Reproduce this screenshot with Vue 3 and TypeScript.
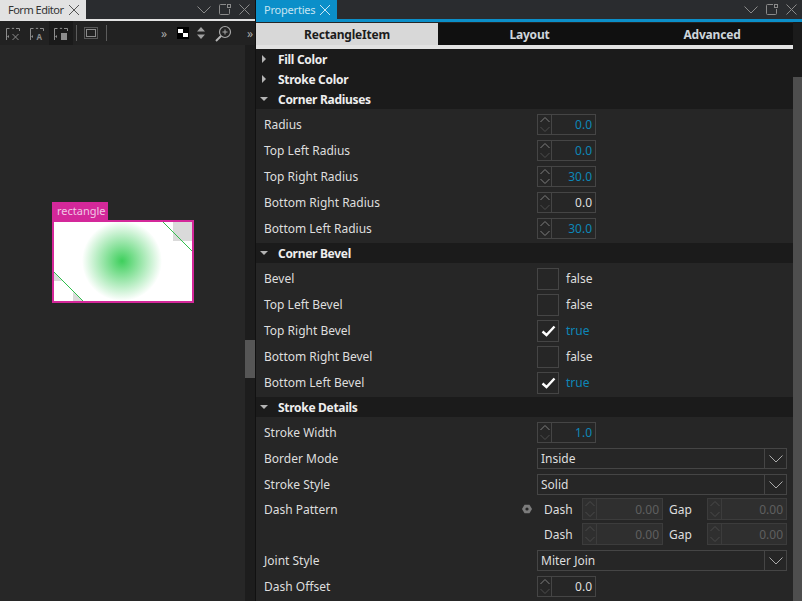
<script setup lang="ts">
type Row =
  | { kind: 'spin'; label: string; value: string; on?: boolean; dim?: boolean }
  | { kind: 'check'; label: string; on: boolean }
  | { kind: 'combo'; label: string; value: string }
  | { kind: 'dash'; label: string }

interface Section {
  title: string
  open: boolean
  rows: Row[]
}

const sections: Section[] = [
  { title: 'Fill Color', open: false, rows: [] },
  { title: 'Stroke Color', open: false, rows: [] },
  {
    title: 'Corner Radiuses',
    open: true,
    rows: [
      { kind: 'spin', label: 'Radius', value: '0.0', on: true, dim: true },
      { kind: 'spin', label: 'Top Left Radius', value: '0.0', on: true, dim: true },
      { kind: 'spin', label: 'Top Right Radius', value: '30.0', on: true },
      { kind: 'spin', label: 'Bottom Right Radius', value: '0.0', dim: true },
      { kind: 'spin', label: 'Bottom Left Radius', value: '30.0', on: true },
    ],
  },
  {
    title: 'Corner Bevel',
    open: true,
    rows: [
      { kind: 'check', label: 'Bevel', on: false },
      { kind: 'check', label: 'Top Left Bevel', on: false },
      { kind: 'check', label: 'Top Right Bevel', on: true },
      { kind: 'check', label: 'Bottom Right Bevel', on: false },
      { kind: 'check', label: 'Bottom Left Bevel', on: true },
    ],
  },
  {
    title: 'Stroke Details',
    open: true,
    rows: [
      { kind: 'spin', label: 'Stroke Width', value: '1.0', on: true, dim: true },
      { kind: 'combo', label: 'Border Mode', value: 'Inside' },
      { kind: 'combo', label: 'Stroke Style', value: 'Solid' },
      { kind: 'dash', label: 'Dash Pattern' },
      { kind: 'combo', label: 'Joint Style', value: 'Miter Join' },
      { kind: 'spin', label: 'Dash Offset', value: '0.0', dim: true },
    ],
  },
]

const tabs = ['RectangleItem', 'Layout', 'Advanced']
</script>

<template>
  <div class="app">
    <section class="left">
      <header class="dock-head">
        <div class="dock-tab light">
          <span>Form Editor</span>
          <svg width="12" height="12" viewBox="0 0 12 12"><path d="M1 1l10 10M11 1L1 11" stroke="#555" fill="none" /></svg>
        </div>
        <div class="dock-actions">
          <svg width="14" height="8" viewBox="0 0 14 8"><path d="M.5 .5l6.5 6.5 6.5-6.5" stroke="#8a8a8a" fill="none" /></svg>
          <svg width="14" height="13" viewBox="0 0 14 13"><path d="M8 1.5H2.5a1 1 0 0 0-1 1v8a1 1 0 0 0 1 1h8a1 1 0 0 0 1-1V6" stroke="#8a8a8a" fill="none" /><rect x="9.5" y="1.5" width="3" height="3" stroke="#8a8a8a" fill="none" /></svg>
          <svg width="11" height="11" viewBox="0 0 11 11"><path d="M.5.5l10 10M10.5.5l-10 10" stroke="#8a8a8a" fill="none" /></svg>
        </div>
      </header>
      <div class="light-line"></div>
      <div class="toolbar">
        <div class="tool">
          <svg width="14" height="14" viewBox="0 0 14 14"><path d="M.5 13V1.5h3M10 1.5h3.5V4" stroke="#8c8c8c" fill="none" /><path d="M7 .5l1.5 1.5h-3z" fill="#8c8c8c" /><path d="M3 8l-2 1.5L3 11z" fill="#8c8c8c" /><path d="M6.5 7l6 6M12.5 7l-6 6" stroke="#8c8c8c" fill="none" /></svg>
        </div>
        <div class="tool">
          <svg width="14" height="14" viewBox="0 0 14 14"><path d="M.5 13V1.5h3M10 1.5h3.5V4" stroke="#8c8c8c" fill="none" /><path d="M7 .5l1.5 1.5h-3z" fill="#8c8c8c" /><path d="M3 8l-2 1.5L3 11z" fill="#8c8c8c" /><text x="6.5" y="13" class="icon-letter">A</text></svg>
        </div>
        <div class="tool on">
          <svg width="14" height="14" viewBox="0 0 14 14"><path d="M.5 13V1.5h3M10 1.5h3.5V4" stroke="#8c8c8c" fill="none" /><path d="M7 .5l1.5 1.5h-3z" fill="#8c8c8c" /><path d="M3 8l-2 1.5L3 11z" fill="#8c8c8c" /><rect x="7" y="6" width="6" height="7" fill="#8c8c8c" /></svg>
        </div>
        <i class="tool-sep first"></i>
        <div class="frame-icon">
          <svg width="14" height="12" viewBox="0 0 14 12"><rect x=".5" y=".5" width="13" height="11" stroke="#8c8c8c" stroke-dasharray="1 1" fill="none" /><rect x="2.5" y="2.5" width="9" height="7" stroke="#8c8c8c" fill="none" /></svg>
        </div>
        <i class="tool-sep"></i>
        <span class="more first-more">»</span>
        <div class="checker"><i></i><i></i></div>
        <svg class="updown" width="10" height="12" viewBox="0 0 10 12"><path d="M5 0l4 4.5H1zM5 12L1 7.5h8z" fill="#a0a0a0" /></svg>
        <svg class="zoom" width="17" height="17" viewBox="0 0 17 17"><circle cx="10" cy="7" r="5.5" stroke="#a8a8a8" stroke-width="1.2" fill="none" /><path d="M10 4.5v5M7.5 7h5" stroke="#a8a8a8" fill="none" /><path d="M1 16l5-5" stroke="#b5b5b5" stroke-width="2" fill="none" /></svg>
        <span class="more last-more">»</span>
      </div>
      <div class="canvas-wrap">
        <div class="canvas">
          <div class="item-tag">rectangle</div>
          <div class="item">
            <svg width="138" height="79" viewBox="0 0 138 79">
              <defs>
                <radialGradient id="glow">
                  <stop offset="0" stop-color="#3ecf5c" />
                  <stop offset="1" stop-color="#3ecf5c" stop-opacity="0" />
                </radialGradient>
              </defs>
              <rect width="138" height="79" fill="#fff" />
              <circle cx="68" cy="39" r="40" fill="url(#glow)" />
              <rect x="119" width="19" height="19" fill="#dadada" />
              <path d="M0 50v9h8zM19 70v9h10z" fill="#dadada" />
              <path d="M109 0l29 29M0 50l29 29" stroke="#2fc04c" fill="none" />
            </svg>
          </div>
        </div>
        <div class="v-strip"><div class="v-handle"></div></div>
      </div>
    </section>

    <section class="right">
      <header class="dock-head">
        <div class="dock-tab blue">
          <span>Properties</span>
          <svg width="12" height="12" viewBox="0 0 12 12"><path d="M1 1l10 10M11 1L1 11" stroke="#c8e6f4" fill="none" /></svg>
        </div>
        <div class="dock-actions">
          <svg width="14" height="8" viewBox="0 0 14 8"><path d="M.5 .5l6.5 6.5 6.5-6.5" stroke="#8a8a8a" fill="none" /></svg>
          <svg width="14" height="13" viewBox="0 0 14 13"><path d="M8 1.5H2.5a1 1 0 0 0-1 1v8a1 1 0 0 0 1 1h8a1 1 0 0 0 1-1V6" stroke="#8a8a8a" fill="none" /><rect x="9.5" y="1.5" width="3" height="3" stroke="#8a8a8a" fill="none" /></svg>
          <svg width="11" height="11" viewBox="0 0 11 11"><path d="M.5.5l10 10M10.5.5l-10 10" stroke="#8a8a8a" fill="none" /></svg>
        </div>
      </header>
      <div class="blue-line"></div>
      <div class="prop-body">
        <div class="prop-main">
          <nav class="prop-tabs">
            <div v-for="(tab, i) in tabs" :key="tab" class="prop-tab" :class="{ active: i === 0 }">{{ tab }}</div>
          </nav>
          <div class="tab-line"></div>
          <div v-for="sec in sections" :key="sec.title" class="section">
            <div class="sec-head">
              <svg v-if="sec.open" class="caret" width="8" height="4" viewBox="0 0 8 4"><path d="M0 0h8L4 4z" fill="#b4b4b4" /></svg>
              <svg v-else class="caret" width="8" height="8" viewBox="0 0 8 8"><path d="M2 0l4 4-4 4z" fill="#b4b4b4" /></svg>
              <span>{{ sec.title }}</span>
            </div>
            <div v-if="sec.open" class="sec-rows">
              <div v-for="row in sec.rows" :key="row.label" class="row" :class="{ 'dash-row': row.kind === 'dash' }">
                <label>{{ row.label }}</label>
                <div class="spin" v-if="row.kind === 'spin'">
                  <div class="spin-btns">
                    <svg width="10" height="5" viewBox="0 0 10 5"><path d="M.5 5l4.5-4.5 4.5 4.5" fill="none" stroke="#7e7e7e" /></svg>
                    <svg width="10" height="5" viewBox="0 0 10 5"><path d="M.5 0l4.5 4.5 4.5-4.5" fill="none" :stroke="row.dim ? '#4d4d4d' : '#7e7e7e'" /></svg>
                  </div>
                  <div class="spin-val" :class="{ blue: row.on }">{{ row.value }}</div>
                </div>
                <div class="check-wrap" v-else-if="row.kind === 'check'">
                  <div class="check">
                    <svg v-if="row.on" width="15" height="12" viewBox="0 0 15 12"><path d="M1.5 6.5l4 3.5 8-8.5" fill="none" stroke="#fff" stroke-width="2.4" /></svg>
                  </div>
                  <span :class="{ blue: row.on }">{{ row.on ? 'true' : 'false' }}</span>
                </div>
                <div class="combo" v-else-if="row.kind === 'combo'">
                  <span>{{ row.value }}</span>
                  <div class="combo-btn">
                    <svg width="14" height="8" viewBox="0 0 14 8"><path d="M.5 .5l6.5 6.5 6.5-6.5" fill="none" stroke="#ababab" /></svg>
                  </div>
                </div>
                <div class="dash" v-else>
                  <svg class="gear" width="10" height="10" viewBox="0 0 10 10"><path d="M2.5.7h5L10 5 7.5 9.3h-5L0 5z" fill="#7c7c7c" /><circle cx="5" cy="5" r="1.6" fill="#262626" /></svg>
                  <div class="dash-grid">
                    <template v-for="n in 2" :key="n">
                      <template v-for="name in ['Dash', 'Gap']" :key="name">
                        <span class="dash-label" :class="name.toLowerCase()">{{ name }}</span>
                        <div class="spin off">
                          <div class="spin-btns">
                            <svg width="10" height="5" viewBox="0 0 10 5"><path d="M.5 5l4.5-4.5 4.5 4.5" fill="none" stroke="#4b4b4b" /></svg>
                            <svg width="10" height="5" viewBox="0 0 10 5"><path d="M.5 0l4.5 4.5 4.5-4.5" fill="none" stroke="#4b4b4b" /></svg>
                          </div>
                          <div class="spin-val">0.00</div>
                        </div>
                      </template>
                    </template>
                  </div>
                </div>
              </div>
            </div>
          </div>
        </div>
        <div class="scroll"><div class="scroll-thumb"></div></div>
      </div>
    </section>
  </div>
</template>

<style>
html,
body {
  margin: 0;
  background: #262626;
  overflow: hidden;
}
</style>

<style scoped>
.app {
  display: flex;
  width: 802px;
  height: 601px;
  overflow: hidden;
  font-family: "Noto Sans", sans-serif;
  font-size: 12px;
  color: #dedede;
  background: #262626;
}
.left {
  display: flex;
  flex-direction: column;
  width: 255px;
  flex: none;
}
.right {
  display: flex;
  flex-direction: column;
  flex: 1;
  min-width: 0;
  border-left: 1px solid #111;
}
.dock-head {
  display: flex;
  justify-content: space-between;
  height: 19px;
  flex: none;
  background: #2a2c2f;
}
.dock-tab {
  display: flex;
  align-items: center;
  justify-content: space-between;
  padding: 0 6px 0 8px;
  font-size: 11px;
  letter-spacing: -0.2px;
  white-space: nowrap;
}
.dock-tab.light {
  width: 72px;
  background: #e2e2e2;
  color: #333;
  letter-spacing: -0.5px;
}
.dock-tab.blue {
  width: 67px;
  background: #0b8fc9;
  color: #c6e4f2;
}
.dock-actions {
  display: flex;
  align-items: center;
  gap: 7px;
  padding-right: 5px;
}
.light-line {
  height: 2px;
  flex: none;
  background: #e3e3e3;
}
.blue-line {
  height: 3px;
  flex: none;
  background: #0b8fc9;
}
.toolbar {
  position: relative;
  display: flex;
  align-items: center;
  height: 24px;
  flex: none;
  padding-left: 1px;
  background: #222;
}
.tool {
  display: flex;
  align-items: center;
  justify-content: center;
  width: 24px;
  height: 24px;
  padding-top: 2px;
  box-sizing: border-box;
}
.tool.on {
  background: #1a1a1a;
}
.icon-letter {
  font: bold 8px "Noto Sans", sans-serif;
  fill: #8c8c8c;
}
.tool-sep {
  width: 1px;
  height: 16px;
  background: #5c5c5c;
}
.tool-sep.first {
  margin-left: 3px;
}
.frame-icon {
  display: flex;
  margin: 0 8px 0 7px;
}
.more {
  font-size: 12px;
  color: #aaa;
}
.first-more {
  margin-left: 54px;
}
.checker {
  position: relative;
  width: 12px;
  height: 12px;
  margin-left: 10px;
  background: #000;
}
.checker i {
  position: absolute;
  width: 5px;
  height: 4px;
  background: #fff;
}
.checker i:first-child {
  left: 1px;
  top: 2px;
}
.checker i:last-child {
  left: 6px;
  top: 6px;
}
.updown {
  margin-left: 7px;
}
.zoom {
  margin-left: 9px;
}
.last-more {
  margin-left: 15px;
}
.canvas-wrap {
  display: flex;
  flex: 1;
  min-height: 0;
}
.canvas {
  position: relative;
  width: 245px;
  background: #272727;
}
.item-tag {
  position: absolute;
  left: 52px;
  top: 157px;
  width: 56px;
  height: 18px;
  box-sizing: border-box;
  padding-left: 5px;
  line-height: 18px;
  font-size: 11px;
  background: #d4289a;
  color: #f1c6e4;
}
.item {
  position: absolute;
  left: 52px;
  top: 175px;
  display: flex;
  border: 2px solid #d4289a;
}
.v-strip {
  position: relative;
  width: 10px;
  background: #1d1d1d;
}
.v-handle {
  position: absolute;
  top: 295px;
  left: 0;
  width: 10px;
  height: 38px;
  background: #565656;
}
.prop-body {
  display: flex;
  flex: 1;
  min-height: 0;
}
.prop-main {
  flex: 1;
  min-width: 0;
}
.prop-tabs {
  display: grid;
  grid-template-columns: 182px 183px 182px;
  height: 22px;
  margin-top: 1px;
  overflow: hidden;
  background: #101010;
  font-weight: 700;
  letter-spacing: -0.2px;
}
.prop-tab {
  display: flex;
  align-items: center;
  justify-content: center;
  color: #cfd6dc;
}
.prop-tab.active {
  background: #d8d8d8;
  color: #1c1c1c;
}
.tab-line {
  height: 4px;
  background: #e2e2e2;
}
.sec-head {
  display: flex;
  align-items: center;
  height: 20px;
  background: #1b1b1b;
  font-weight: 700;
  letter-spacing: -0.3px;
  color: #eee;
}
.caret {
  flex: none;
  margin: 0 10px 0 4px;
}
.sec-rows {
  padding: 2px 0;
}
.row {
  display: flex;
  align-items: center;
  height: 26px;
  padding-left: 8px;
  padding-top: 1px;
  box-sizing: border-box;
}
.row label {
  width: 273px;
  flex: none;
}
.dash-row {
  align-items: flex-start;
  height: 50px;
  padding-top: 1px;
}
.dash-row label {
  margin-top: 3px;
}
.spin {
  display: flex;
  width: 59px;
  height: 21px;
  box-sizing: border-box;
  border: 1px solid #454545;
}
.spin-btns {
  display: flex;
  flex-direction: column;
  align-items: center;
  justify-content: space-between;
  width: 14px;
  padding: 2px 0;
  box-sizing: border-box;
  flex: none;
  border-right: 1px solid #454545;
}
.spin-val {
  flex: 1;
  padding-right: 3px;
  line-height: 19px;
  text-align: right;
}
.blue {
  color: #0d86b8;
}
.check-wrap {
  display: flex;
  align-items: center;
  gap: 7px;
}
.check {
  display: flex;
  align-items: center;
  justify-content: center;
  width: 22px;
  height: 22px;
  box-sizing: border-box;
  border: 1px solid #454545;
}
.combo {
  display: flex;
  align-items: center;
  justify-content: space-between;
  width: 250px;
  height: 21px;
  box-sizing: border-box;
  padding-left: 3px;
  border: 1px solid #454545;
}
.combo-btn {
  display: flex;
  align-items: center;
  justify-content: center;
  width: 21px;
  height: 19px;
  border-left: 1px solid #454545;
}
.dash {
  position: relative;
  display: flex;
}
.gear {
  position: absolute;
  left: -15px;
  top: 6px;
}
.dash-grid {
  display: grid;
  grid-template-columns: 38px 81px 44px 80px;
  row-gap: 2px;
  margin-left: 7px;
}
.dash-grid .spin {
  width: 100%;
  height: 22px;
  background: #2f2f2f;
  border-color: #3c3c3c;
}
.dash-grid .spin-btns {
  border-color: #3c3c3c;
}
.dash-grid .spin-val {
  color: #5f5f5f;
  line-height: 21px;
}
.dash-label {
  line-height: 22px;
  padding-top: 1px;
}
.dash-label.gap {
  padding-left: 6px;
}
.scroll {
  position: relative;
  width: 9px;
  flex: none;
  background: #1b1b1b;
}
.scroll-thumb {
  position: absolute;
  top: 55px;
  bottom: 0;
  width: 9px;
  background: #4e4e4e;
}
</style>
